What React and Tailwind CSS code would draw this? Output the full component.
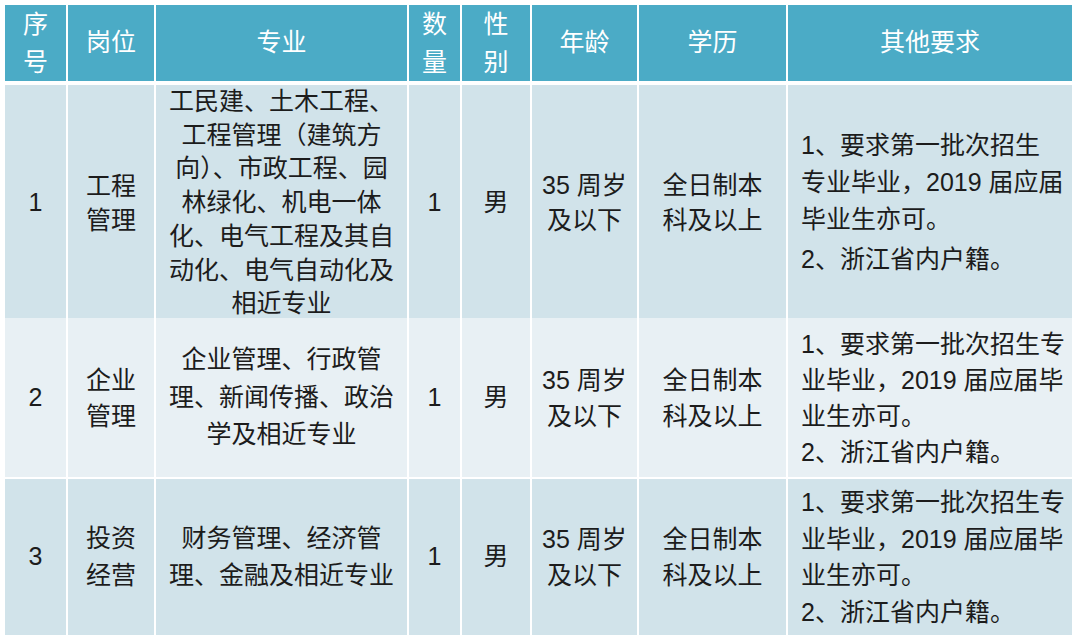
import React from "react";

const cols = "grid grid-cols-[61px_86px_251px_51px_68px_105px_147px_284px] gap-x-[2px]";

function Lines({ lines, lh = "leading-[36px]", className = "" }) {
  return (
    <div className={`whitespace-nowrap ${lh} ${className}`}>
      {lines.map((l, i) => (
        <div key={i}>{l}</div>
      ))}
    </div>
  );
}

function C({ children, bg, left = false }) {
  return (
    <div
      className={`flex items-center ${left ? "justify-start pl-[13px] text-left" : "justify-center text-center"} ${bg}`}
    >
      {children}
    </div>
  );
}

const reqA = ["1、要求第一批次招生专", "业毕业，2019 届应届毕", "业生亦可。", "2、浙江省内户籍。"];

export default function App() {
  const head = "bg-[#4babc6] text-white";
  const dark = "bg-[#d1e3ea]";
  const light = "bg-[#e8f0f4]";
  return (
    <div
      className="w-[1080px] h-[643px] bg-white pt-[5px] pl-[5px] text-[25px] text-[#1c1c1c] flex flex-col"
      style={{ fontFamily: '"Liberation Sans", "Noto Sans CJK SC", sans-serif' }}
    >
      <div className={`${cols} h-[76px] mb-[4px]`}>
        <C bg={head}><Lines lines={["序", "号"]} lh="leading-[38px]" /></C>
        <C bg={head}>岗位</C>
        <C bg={head}>专业</C>
        <C bg={head}><Lines lines={["数", "量"]} lh="leading-[38px]" /></C>
        <C bg={head}><Lines lines={["性", "别"]} lh="leading-[38px]" /></C>
        <C bg={head}>年龄</C>
        <C bg={head}>学历</C>
        <C bg={head}>其他要求</C>
      </div>
      <div className="flex flex-col gap-y-[2px]">
        <div className={`${cols} h-[231px]`}>
          <C bg={dark}>1</C>
          <C bg={dark}><Lines lines={["工程", "管理"]} lh="leading-[34px]" /></C>
          <C bg={dark}>
            <Lines
              lh="leading-[33.7px]"
              lines={[
                "工民建、土木工程、",
                "工程管理（建筑方",
                "向）、市政工程、园",
                "林绿化、机电一体",
                "化、电气工程及其自",
                "动化、电气自动化及",
                "相近专业",
              ]}
            />
          </C>
          <C bg={dark}>1</C>
          <C bg={dark}>男</C>
          <C bg={dark}><Lines lines={["35 周岁", "及以下"]} lh="leading-[35px]" /></C>
          <C bg={dark}><Lines lines={["全日制本", "科及以上"]} lh="leading-[35px]" /></C>
          <C bg={dark} left>
            <div className="whitespace-nowrap leading-[37px]">
              <div>1、要求第一批次招生</div>
              <div>专业毕业，2019 届应届</div>
              <div>毕业生亦可。</div>
              <div className="mt-[3px]">2、浙江省内户籍。</div>
            </div>
          </C>
        </div>
        <div className={`${cols} h-[159px]`}>
          <C bg={light}>2</C>
          <C bg={light}><Lines lines={["企业", "管理"]} lh="leading-[36px]" /></C>
          <C bg={light}>
            <Lines lh="leading-[37.5px]" lines={["企业管理、行政管", "理、新闻传播、政治", "学及相近专业"]} />
          </C>
          <C bg={light}>1</C>
          <C bg={light}>男</C>
          <C bg={light}><Lines lines={["35 周岁", "及以下"]} lh="leading-[36px]" /></C>
          <C bg={light}><Lines lines={["全日制本", "科及以上"]} lh="leading-[36px]" /></C>
          <C bg={light} left><Lines lines={reqA} lh="leading-[36px]" /></C>
        </div>
        <div className={`${cols} h-[156px]`}>
          <C bg={dark}>3</C>
          <C bg={dark}><Lines lines={["投资", "经营"]} lh="leading-[37px]" /></C>
          <C bg={dark}>
            <Lines lh="leading-[37px]" lines={["财务管理、经济管", "理、金融及相近专业"]} />
          </C>
          <C bg={dark}>1</C>
          <C bg={dark}>男</C>
          <C bg={dark}><Lines lines={["35 周岁", "及以下"]} lh="leading-[36px]" /></C>
          <C bg={dark}><Lines lines={["全日制本", "科及以上"]} lh="leading-[36px]" /></C>
          <C bg={dark} left><Lines lines={reqA} lh="leading-[36.5px]" /></C>
        </div>
      </div>
    </div>
  );
}
